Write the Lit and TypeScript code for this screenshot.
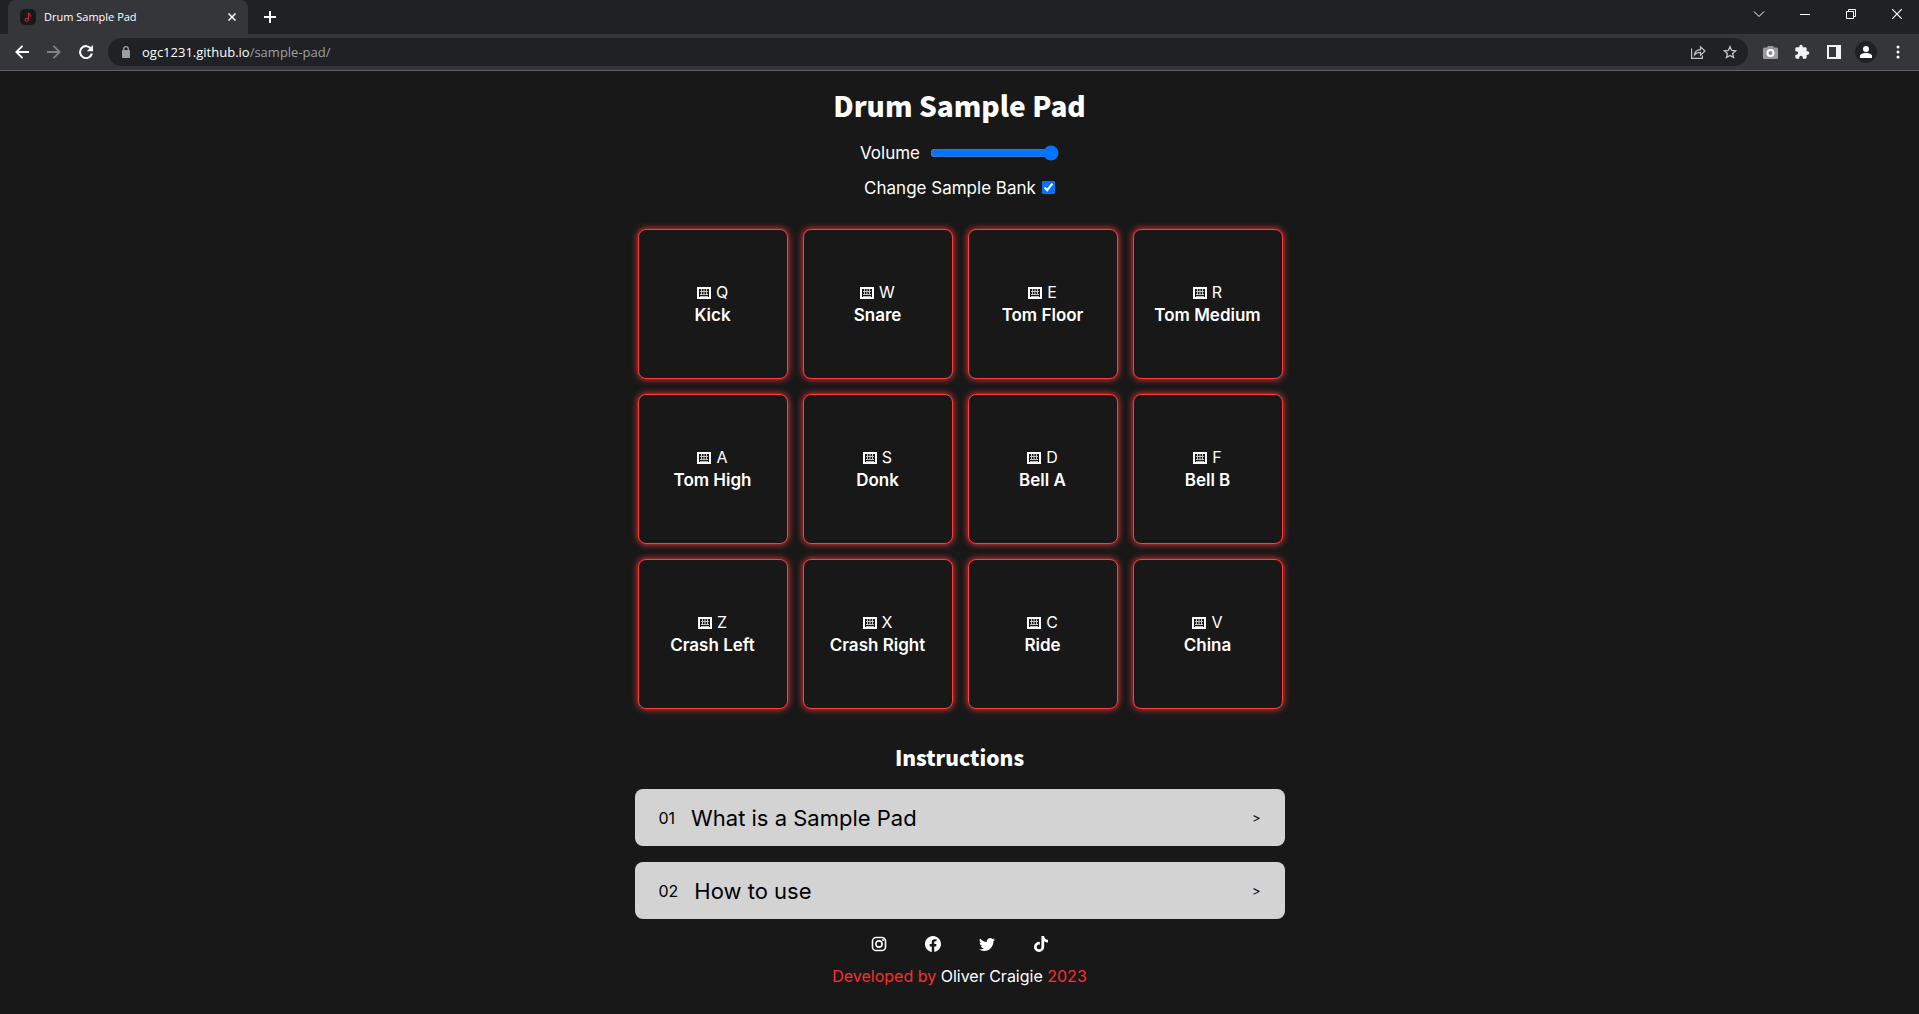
import { LitElement, html, css, svg } from "lit";
import { customElement, property, state } from "lit/decorators.js";

interface Sample {
  key: string;
  name: string;
}

const SAMPLES: Sample[] = [
  { key: "Q", name: "Kick" },
  { key: "W", name: "Snare" },
  { key: "E", name: "Tom Floor" },
  { key: "R", name: "Tom Medium" },
  { key: "A", name: "Tom High" },
  { key: "S", name: "Donk" },
  { key: "D", name: "Bell A" },
  { key: "F", name: "Bell B" },
  { key: "Z", name: "Crash Left" },
  { key: "X", name: "Crash Right" },
  { key: "C", name: "Ride" },
  { key: "V", name: "China" },
];

const QUESTIONS = [
  { number: "01", title: "What is a Sample Pad" },
  { number: "02", title: "How to use" },
];

const SOCIALS = [
  {
    name: "Instagram",
    shape: svg`<path fill="none" stroke="currentColor" stroke-width="1.5" d="M4.8 1.4h5.4a3.4 3.4 0 0 1 3.4 3.4v5.4a3.4 3.4 0 0 1-3.4 3.4H4.8a3.4 3.4 0 0 1-3.4-3.4V4.8a3.4 3.4 0 0 1 3.4-3.4z"/><circle cx="7.5" cy="7.5" r="2.9" fill="none" stroke="currentColor" stroke-width="1.5"/><circle cx="11.3" cy="3.8" r=".9" fill="currentColor"/>`,
    box: "0 0 15 15",
  },
  {
    name: "Facebook",
    shape: svg`<path fill="currentColor" d="M16 8.049c0-4.446-3.582-8.05-8-8.05C3.58 0-.002 3.603-.002 8.05c0 4.017 2.926 7.347 6.75 7.951v-5.625h-2.03V8.05H6.75V6.275c0-2.017 1.195-3.131 3.022-3.131.876 0 1.791.157 1.791.157v1.98h-1.009c-.993 0-1.303.621-1.303 1.258v1.51h2.218l-.354 2.326H9.25V16c3.824-.604 6.75-3.934 6.75-7.951z"/>`,
    box: "0 0 16 16",
  },
  {
    name: "Twitter",
    shape: svg`<path fill="currentColor" d="M5.026 15c6.038 0 9.341-5.003 9.341-9.334 0-.14 0-.282-.006-.422A6.685 6.685 0 0 0 16 3.542a6.658 6.658 0 0 1-1.889.518 3.301 3.301 0 0 0 1.447-1.817 6.533 6.533 0 0 1-2.087.793A3.286 3.286 0 0 0 7.875 6.03a9.325 9.325 0 0 1-6.767-3.429 3.289 3.289 0 0 0 1.018 4.382A3.323 3.323 0 0 1 .64 6.575v.045a3.288 3.288 0 0 0 2.632 3.218 3.203 3.203 0 0 1-.865.115 3.23 3.23 0 0 1-.614-.057 3.283 3.283 0 0 0 3.067 2.277A6.588 6.588 0 0 1 .78 13.58a6.32 6.32 0 0 1-.78-.045A9.344 9.344 0 0 0 5.026 15z"/>`,
    box: "0 0 16 16",
  },
  {
    name: "TikTok",
    shape: svg`<path fill="currentColor" d="M448 209.910a210.060 210.060 0 0 1-122.770-39.250V349.380A162.550 162.550 0 1 1 185 188.310V278.200a74.620 74.620 0 1 0 52.230 71.180V0h88a121.180 121.180 0 0 0 1.860 22.170A122.180 122.180 0 0 0 381 102.390a121.430 121.430 0 0 0 67 20.140z"/>`,
    box: "0 0 448 512",
  },
];

@customElement("browser-bar")
class BrowserBar extends LitElement {
  static styles = css`
    :host {
      display: block;
      font: 12px/16px "Open Sans", "Noto Sans", sans-serif;
      color: #fff;
    }
    button {
      display: flex;
      align-items: center;
      justify-content: center;
      padding: 0;
      border: 0;
      background: none;
      color: inherit;
    }
    svg {
      display: block;
    }
    .strip {
      display: flex;
      height: 34px;
      padding-left: 8px;
      background: #202124;
    }
    .tab {
      display: flex;
      align-items: center;
      gap: 8px;
      width: 240px;
      box-sizing: border-box;
      padding: 0 8px 0 12px;
      border-radius: 8px 8px 0 0;
      background: #35363a;
      font-size: 11px;
    }
    .title {
      flex: 1;
    }
    .small {
      width: 16px;
      height: 16px;
    }
    .new {
      width: 44px;
    }
    .window {
      display: flex;
      margin-left: auto;
    }
    .window button {
      width: 46px;
      height: 28px;
      padding-left: 2px;
    }
    .toolbar {
      display: flex;
      align-items: center;
      height: 36px;
      padding: 0 5px 0 6px;
      border-bottom: 1px solid #5f6064;
      background: #35363a;
    }
    .nav {
      width: 32px;
      height: 28px;
    }
    .address {
      display: flex;
      flex: 1;
      align-items: center;
      height: 28px;
      margin: 0 6px;
      padding: 0 2px 0 12px;
      border-radius: 14px;
      background: #202124;
    }
    .lock {
      margin-right: 10px;
    }
    .url {
      flex: 1;
      font-size: 13px;
    }
    .path {
      color: #9aa0a6;
    }
    .dim {
      color: #7f8185;
    }
    .soft {
      color: #c4c7c9;
    }
    .avatar {
      width: 22px;
      height: 22px;
      margin: 0 5px;
      border-radius: 11px;
      background: #202124;
    }
  `;

  render() {
    return html`
      <div class="strip">
        <div class="tab">
          <svg width="16" height="16" viewBox="0 0 16 16" aria-hidden="true">
            <rect width="16" height="16" rx="5" fill="#181818" />
            <ellipse cx="6.700" cy="10.800" rx="1.700" ry="1.500" fill="none" stroke="#c8282e" stroke-width="1.100" />
            <path d="M8.400 10.800V3.500c.2 1.600 2.400 1.700 2 4" fill="none" stroke="#c8282e" stroke-width="1.100" />
          </svg>
          <span class="title">Drum Sample Pad</span>
          <button class="small" aria-label="Close tab">
            <svg width="8" height="8" viewBox="0 0 8 8"><path d="M.5.5l7 7m0-7l-7 7" stroke="currentColor" stroke-width="1.5" /></svg>
          </button>
        </div>
        <button class="new" aria-label="New tab">
          <svg width="12" height="12" viewBox="0 0 12 12"><path d="M6 0v12M0 6h12" stroke="currentColor" stroke-width="2" /></svg>
        </button>
        <div class="window">
          <button aria-label="Search tabs">
            <svg width="12" height="8" viewBox="0 0 12 8"><path d="M1 1.5l5 5 5-5" fill="none" stroke="currentColor" /></svg>
          </button>
          <button aria-label="Minimize">
            <svg width="10" height="10" viewBox="0 0 10 10"><path d="M0 5.5h10" stroke="currentColor" /></svg>
          </button>
          <button aria-label="Restore">
            <svg width="10" height="10" viewBox="0 0 10 10"><path d="M.5 2.5h7v7h-7zM2.5 2.5v-2h7v7h-2" fill="none" stroke="currentColor" /></svg>
          </button>
          <button aria-label="Close">
            <svg width="10" height="10" viewBox="0 0 10 10"><path d="M0 0l10 10M10 0L0 10" stroke="currentColor" stroke-width="1.2" /></svg>
          </button>
        </div>
      </div>
      <div class="toolbar">
        <button class="nav" aria-label="Back">
          <svg width="14" height="14" viewBox="0 0 14 14"><path d="M14 7H1.5M7.5.8L1.3 7l6.2 6.2" fill="none" stroke="currentColor" stroke-width="1.8" /></svg>
        </button>
        <button class="nav dim" aria-label="Forward">
          <svg width="14" height="14" viewBox="0 0 14 14"><path d="M0 7h12.500M6.500.8L12.700 7l-6.200 6.200" fill="none" stroke="currentColor" stroke-width="1.8" /></svg>
        </button>
        <button class="nav" aria-label="Reload">
          <svg width="14" height="14" viewBox="0 0 14 14"><path d="M12.200 4A6 6 0 1 0 12.900 8.500" fill="none" stroke="currentColor" stroke-width="2" /><path d="M14 0v6.200H7.800z" fill="currentColor" /></svg>
        </button>
        <div class="address">
          <svg class="lock" width="12" height="12" viewBox="0 0 12 12" aria-hidden="true">
            <rect x="2" y="4" width="8" height="8" rx="1" fill="#9aa0a6" />
            <path d="M3.700 4.500V3a2.300 2.300 0 0 1 4.600 0v1.500" fill="none" stroke="#9aa0a6" stroke-width="1.300" />
          </svg>
          <span class="url">ogc1231.github.io<span class="path">/sample-pad/</span></span>
          <button class="nav soft" aria-label="Share">
            <svg width="15" height="14" viewBox="0 0 15 14"><path d="M.6 3.500v9.900h10.800v-3M3.500 10c.3-3.500 2.400-5.200 6-5.400V1.800L14 6l-4.500 4.100V7.400C7 7.400 5 8 3.500 10z" fill="none" stroke="currentColor" stroke-width="1.200" /></svg>
          </button>
          <button class="nav soft" aria-label="Bookmark">
            <svg width="14" height="14" viewBox="0 0 14 14"><path d="M7 1.600l1.600 3.800 4.100.4-3.100 2.700.9 4L7 10.400l-3.500 2.100.9-4L1.300 5.800l4.100-.4z" fill="none" stroke="currentColor" stroke-width="1.300" /></svg>
          </button>
        </div>
        <button class="nav" aria-label="Screenshot">
          <svg width="15" height="14" viewBox="0 0 15 14"><path d="M1.500 2.500H4L5 1h5l1 1.500h2.500A1.500 1.500 0 0 1 15 4v8.500a1.500 1.500 0 0 1-1.500 1.500h-12A1.500 1.500 0 0 1 0 12.500V4a1.500 1.500 0 0 1 1.500-1.500z" fill="#9b9b9b" /><circle cx="7.500" cy="8" r="3" fill="#8a8a8a" stroke="#fff" stroke-width="2" /></svg>
        </button>
        <button class="nav" aria-label="Extensions">
          <svg width="16" height="16" viewBox="0 0 24 24"><path d="M20.500 11H19V7c0-1.100-.9-2-2-2h-4V3.500a2.500 2.500 0 0 0-5 0V5H4c-1.100 0-2 .9-2 2v3.800h1.500a2.700 2.700 0 0 1 0 5.400H2V20c0 1.100.9 2 2 2h3.800v-1.500a2.700 2.700 0 0 1 5.400 0V22H17c1.100 0 2-.9 2-2v-4h1.500a2.500 2.500 0 0 0 0-5z" fill="#f1f3f4" /></svg>
        </button>
        <button class="nav" aria-label="Side panel">
          <svg width="14" height="14" viewBox="0 0 14 14"><path fill-rule="evenodd" d="M0 0h14v14H0zM2 2v10h7V2z" fill="#f1f3f4" /></svg>
        </button>
        <button class="avatar" aria-label="Profile">
          <svg width="12" height="12" viewBox="0 0 12 12"><circle cx="6" cy="3" r="3" fill="#fff" /><path d="M0 12v-2c0-2 3-3 6-3s6 1 6 3v2z" fill="#fff" /></svg>
        </button>
        <button class="nav" aria-label="Menu">
          <svg width="4" height="14" viewBox="0 0 4 14"><circle cx="2" cy="2" r="1.500" fill="currentColor" /><circle cx="2" cy="7" r="1.500" fill="currentColor" /><circle cx="2" cy="12" r="1.500" fill="currentColor" /></svg>
        </button>
      </div>
    `;
  }
}

@customElement("sample-button")
class SampleButton extends LitElement {
  @property() key = "";
  @property() name = "";

  static styles = css`
    :host {
      display: block;
    }
    .pad {
      display: flex;
      flex-direction: column;
      align-items: center;
      justify-content: center;
      width: 100%;
      aspect-ratio: 1;
      padding: 0;
      border: 1px solid #ff3b3b;
      border-radius: 8px;
      background: #181818;
      box-shadow: 0 0 7px #ff3b3b;
      color: #fff;
      font: 16px/23px Inter, "Open Sans", sans-serif;
    }
    .key {
      display: flex;
      align-items: center;
      gap: 5px;
    }
    .name {
      font-size: 17px;
      font-weight: 600;
    }
  `;

  render() {
    return html`
      <button class="pad">
        <span class="key">
          <svg width="14" height="12" viewBox="0 0 14 12" aria-hidden="true">
            <path d="M1 1h12v10H1z" fill="none" stroke="currentColor" stroke-width="2" />
            <path d="M3 4.500h8M3 7.500h8M4.500 2v6M7 2v6M9.500 2v6" stroke="currentColor" stroke-width="1" opacity=".75" />
            <path d="M3 9.500h8" stroke="currentColor" stroke-width="1" opacity=".7" />
          </svg>
          ${this.key}
        </span>
        <span class="name">${this.name}</span>
      </button>
    `;
  }
}

@customElement("app-root")
class AppRoot extends LitElement {
  @state() private volume = 100;

  static styles = css`
    :host {
      display: block;
      min-height: 100vh;
      background: #181818;
      color: #fff;
      font: 16px/20px Inter, "Open Sans", sans-serif;
    }
    main {
      display: flex;
      flex-direction: column;
      align-items: center;
      max-width: 650px;
      margin: 0 auto;
      padding-top: 10px;
    }
    h1,
    h2 {
      margin: 0;
      font-family: "Noto Sans CJK JP", sans-serif;
      font-weight: 900;
    }
    h1 {
      margin-bottom: 6px;
      font-size: 28px;
      line-height: 48px;
    }
    h2 {
      margin: 30px 0 14px;
      font-size: 21px;
      line-height: 36px;
    }
    .control {
      display: flex;
      align-items: center;
      height: 35px;
      font-size: 17px;
    }
    input {
      accent-color: #0075ff;
    }
    .slider {
      width: 129px;
      margin: 2px 0 2px 10px;
    }
    .check {
      width: 13px;
      height: 13px;
      margin: 0 0 0 6px;
    }
    .pads {
      display: grid;
      grid-template-columns: repeat(4, 1fr);
      gap: 15px;
      align-self: stretch;
      margin: 24px 2px 0 3px;
    }
    .questions {
      display: flex;
      flex-direction: column;
      gap: 16px;
      align-self: stretch;
    }
    .question {
      display: flex;
      align-items: center;
      height: 57px;
      padding: 0 24px;
      border: 0;
      border-radius: 8px;
      background: #d3d3d3;
      color: #000;
      font: inherit;
    }
    .title {
      flex: 1;
      margin-left: 16px;
      font-size: 22px;
      text-align: left;
    }
    .arrow {
      font-size: 13px;
    }
    .socials {
      display: flex;
      gap: 38px;
      margin-top: 17px;
    }
    a {
      color: #fff;
      text-decoration: none;
    }
    .socials svg {
      display: block;
    }
    .credit {
      margin: 14px 0 0;
      color: #ff2c2c;
    }
  `;

  private setVolume(event: Event) {
    this.volume = Number((event.target as HTMLInputElement).value);
  }

  render() {
    return html`
      <browser-bar></browser-bar>
      <main>
        <h1>Drum Sample Pad</h1>
        <div class="control">
          <label for="volume">Volume</label>
          <input class="slider" id="volume" type="range" min="0" max="100" .value=${String(this.volume)} @input=${this.setVolume} />
        </div>
        <div class="control">
          <label for="bank">Change Sample Bank</label>
          <input class="check" id="bank" type="checkbox" checked />
        </div>
        <div class="pads">
          ${SAMPLES.map((sample) => html`<sample-button .key=${sample.key} .name=${sample.name}></sample-button>`)}
        </div>
        <h2>Instructions</h2>
        <div class="questions">
          ${QUESTIONS.map(
            (question) => html`
              <button class="question" aria-expanded="false">
                <span class="number">${question.number}</span>
                <span class="title">${question.title}</span>
                <span class="arrow">&gt;</span>
              </button>
            `,
          )}
        </div>
        <nav class="socials" aria-label="Social media">
          ${SOCIALS.map(
            (social) => html`
              <a href="#" aria-label=${social.name}>
                <svg width="16" height="16" viewBox=${social.box}>${social.shape}</svg>
              </a>
            `,
          )}
        </nav>
        <p class="credit">Developed by <a href="#">Oliver Craigie</a> 2023</p>
      </main>
    `;
  }
}
